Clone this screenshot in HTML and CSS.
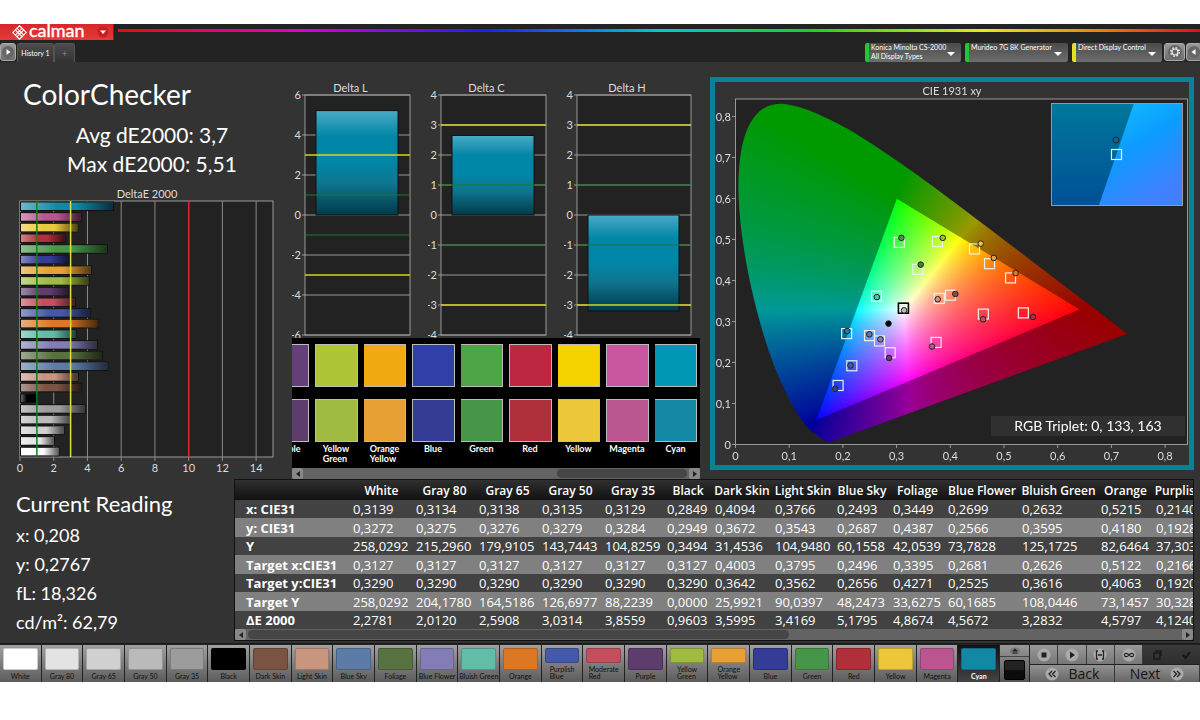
FILE: index.html
```html
<!DOCTYPE html>
<html lang="en">
  <head>
    <meta charset="UTF-8" />
    <meta name="viewport" content="width=device-width, initial-scale=1.0" />
    <title>Calman - ColorChecker</title>
    <link rel="stylesheet" href="styles.css">
  </head>
  <body>
    <div class="app">
      <header>
        <div class="brand-row">
          <button class="brand" aria-label="Calman menu">
            <svg class="logo" viewBox="0 0 16 16" width="15" height="15">
              <g fill="none" stroke="#fff" stroke-width="1.2">
                <path d="M8 .8L10.700 3.500 8 6.200 5.300 3.500zM8 9.800l2.700 2.700L8 15.200l-2.700-2.700zM3.500 5.300L6.200 8l-2.700 2.700L.8 8zM12.500 5.300L15.200 8l-2.700 2.700L9.800 8z" />
                <path d="M5.300 3.500L3.500 5.300M10.700 3.500l1.800 1.800M3.500 10.700l1.800 1.800M12.500 10.700l-1.800 1.800M8 6.200L9.800 8 8 9.800 6.200 8z" />
              </g>
            </svg>
            <span class="brand-name">calman</span>
            <svg class="round-arrow" viewBox="0 0 12 12" width="12" height="12">
              <circle cx="6" cy="6" r="5.500" fill="#c81f22" />
              <path d="M3 4.500h6l-3 3.500z" fill="#fff" />
            </svg>
          </button>
          <div class="rainbow"></div>
        </div>
        <div class="tab-row">
          <button class="icon-btn" aria-label="Run">
            <svg viewBox="0 0 14 14" width="14" height="14"><circle cx="7" cy="7" r="6" fill="#666" /><path d="M5.500 4l4 3-4 3z" fill="#fff" /></svg>
          </button>
          <button class="tab active">History 1</button>
          <button class="tab add" aria-label="Add tab">+</button>
          <div class="devices">
            <button class="device ok"><span>Konica Minolta CS-2000<br>All Display Types</span><i class="caret"></i></button>
            <button class="device ok wide"><span>Murideo 7G 8K Generator</span><i class="caret"></i></button>
            <button class="device warn"><span>Direct Display Control</span><i class="caret"></i></button>
            <button class="icon-btn gear" aria-label="Settings">
              <svg viewBox="0 0 16 16" width="16" height="16"><circle cx="8" cy="8" r="7" fill="#666" /><circle cx="8" cy="8" r="3" fill="none" stroke="#eee" stroke-width="1.200" /><circle cx="8" cy="8" r="4.300" fill="none" stroke="#eee" stroke-width="1.400" stroke-dasharray="1.700 1.680" /></svg>
            </button>
            <button class="icon-btn" aria-label="Collapse">
              <svg viewBox="0 0 14 14" width="14" height="14"><circle cx="7" cy="7" r="6" fill="#666" /><path d="M8.500 4l-4 3 4 3z" fill="#fff" /></svg>
            </button>
          </div>
        </div>
      </header>

      <main>
        <section class="panels">
          <div class="summary">
            <h1>ColorChecker</h1>
            <div class="stats">
              <p>Avg dE2000: 3,7</p>
              <p>Max dE2000: 5,51</p>
            </div>
            <svg id="delta-e" class="chart" viewBox="0 0 292 292"></svg>
          </div>

          <div class="deltas">
            <div class="delta-charts">
              <svg id="delta-l" class="chart" viewBox="0 0 136 258"></svg>
              <svg id="delta-c" class="chart" viewBox="0 0 136 258"></svg>
              <svg id="delta-h" class="chart" viewBox="0 0 136 258"></svg>
            </div>
            <ul class="compare" id="compare"></ul>
            <div class="scrollbar">
              <button class="scroll-btn left" aria-label="Scroll left"></button>
              <div class="scroll-track"><div class="scroll-thumb end"></div></div>
              <button class="scroll-btn right" aria-label="Scroll right"></button>
            </div>
          </div>

          <div class="cie">
            <canvas id="cie-fill" width="948" height="766"></canvas>
            <svg id="cie-plot" class="chart" viewBox="0 0 474 383"></svg>
          </div>
        </section>

        <section class="readings">
          <div class="current">
            <h2>Current Reading</h2>
            <p>x: 0,208</p>
            <p>y: 0,2767</p>
            <p>fL: 18,326</p>
            <p>cd/m²: 62,79</p>
          </div>
          <div class="data">
            <div class="table-wrap">
              <table>
                <colgroup id="cols"></colgroup>
                <thead><tr id="head"></tr></thead>
                <tbody id="rows"></tbody>
              </table>
            </div>
            <div class="scrollbar">
              <button class="scroll-btn left" aria-label="Scroll left"></button>
              <div class="scroll-track"><div class="scroll-thumb start"></div></div>
              <button class="scroll-btn right" aria-label="Scroll right"></button>
            </div>
          </div>
        </section>
      </main>

      <footer>
        <div class="patches" id="patches"></div>
        <div class="preview">
          <button class="eject" aria-label="Expand">
            <svg viewBox="0 0 12 8" width="12" height="8"><ellipse cx="6" cy="4" rx="5" ry="3.500" fill="#777" /><path d="M3 4.500l3-3 3 3z" fill="#222" /><path d="M3.500 5.500h5v1h-5z" fill="#222" /></svg>
          </button>
          <button class="stop-patch" aria-label="Current patch"><span></span></button>
        </div>
        <div class="controls">
          <div class="tools">
            <button aria-label="Stop"><svg viewBox="0 0 14 14" width="14" height="14"><circle cx="7" cy="7" r="6.500" fill="#aaa" /><path d="M4.500 4.500h5v5h-5z" fill="#222" /></svg></button>
            <button aria-label="Play"><svg viewBox="0 0 14 14" width="14" height="14"><circle cx="7" cy="7" r="6.500" fill="#aaa" /><path d="M5 3.500l5 3.500-5 3.500z" fill="#222" /></svg></button>
            <button aria-label="Read series"><svg viewBox="0 0 14 14" width="14" height="14"><circle cx="7" cy="7" r="6.500" fill="#aaa" /><path d="M5 3H3.500v8H5M9 3h1.500v8H9M5 7h4" fill="none" stroke="#222" stroke-width="1.300" /></svg></button>
            <button aria-label="Continuous"><svg viewBox="0 0 14 14" width="14" height="14"><circle cx="7" cy="7" r="6.500" fill="#aaa" /><path d="M7 7C5.500 5 2.500 4.500 2.500 7S5.500 9 7 7s4.500-2.500 4.500 0S8.500 9 7 7z" fill="none" stroke="#222" stroke-width="1.200" /></svg></button>
            <button class="off" aria-label="Copy"><svg viewBox="0 0 14 14" width="14" height="14"><path d="M4 5h6v6H4zM6 5V3h5v5" fill="none" stroke="#1c1c1c" stroke-width="1.400" /></svg></button>
            <button class="off" aria-label="Confirm"><svg viewBox="0 0 14 14" width="14" height="14"><circle cx="7" cy="7" r="5" fill="#333" /><path d="M4 7l2.500 3L11 4" fill="none" stroke="#161616" stroke-width="2" /></svg></button>
          </div>
          <div class="nav">
            <button>
              <svg viewBox="0 0 14 14" width="14" height="14"><circle cx="7" cy="7" r="6.500" fill="#aaa" /><path d="M7 4L4 7l3 3M10.500 4l-3 3 3 3" fill="none" stroke="#222" stroke-width="1.300" /></svg>
              Back
            </button>
            <button>
              Next
              <svg viewBox="0 0 14 14" width="14" height="14"><circle cx="7" cy="7" r="6.500" fill="#aaa" /><path d="M3.500 4l3 3-3 3M7 4l3 3-3 3" fill="none" stroke="#222" stroke-width="1.300" /></svg>
            </button>
          </div>
        </div>
      </footer>
    </div>
    <script src="script.js"></script>
  </body>
</html>
```
FILE: styles.css
```css
* {
  margin: 0;
  padding: 0;
  box-sizing: border-box;
}
body {
  padding: 24px 0;
  background-color: #fff;
  font-family: Lato, "Liberation Sans", sans-serif;
  color: #fff;
}
button {
  border: none;
  background: none;
  font-family: inherit;
  color: inherit;
  cursor: pointer;
}
ul {
  list-style: none;
}
.app {
  background-color: #333;
  overflow: hidden;
}

/* header */
header {
  background-color: #232323;
}
.brand-row {
  display: flex;
  height: 16px;
}
.brand {
  display: flex;
  align-items: center;
  width: 114px;
  padding-left: 12px;
  background: linear-gradient(#d8272b, #e33b38);
  border-right: 1px solid #8c1a1c;
  overflow: hidden;
}
.brand-name {
  margin-left: 2px;
  font-size: 18px;
  line-height: 16px;
  height: 20px;
  -webkit-text-stroke: 0.4px #fff;
}
.round-arrow {
  margin-left: 12px;
}
.rainbow {
  flex: 1;
  height: 3px;
  margin: 5px 0 0 4px;
  background: linear-gradient(to right, #e01010, #e000d0 17%, #2020f0 34%, #00c8d8 50%, #20d020 64%, #e8e820 80%, #e88010 91%, #e01010);
}
.tab-row {
  display: flex;
  align-items: flex-end;
  height: 22px;
}
.icon-btn {
  display: flex;
  align-items: center;
  justify-content: center;
  width: 16px;
  height: 18px;
  margin-bottom: 1px;
  background: linear-gradient(#999, #6c6c6c);
  border: 1px solid #aaa;
  border-radius: 3px;
}
.icon-btn svg,
.tools svg,
.nav svg,
.brand svg {
  flex: none;
}
.tab {
  height: 19px;
  padding: 0 3px;
  margin-left: 1px;
  background: linear-gradient(#4c4c4c, #333);
  border: 1px solid #555;
  border-bottom: none;
  border-radius: 3px 3px 0 0;
  font-size: 7px;
}
.tab.active {
  width: 37px;
}
.tab.add {
  width: 21px;
  margin-left: 0;
  color: #888;
  font-size: 9px;
}
.devices {
  display: flex;
  margin-left: auto;
  margin-right: -2px;
  gap: 1px;
}
.device {
  display: flex;
  width: 90px;
  height: 19px;
  padding-left: 2px;
  margin-right: 3px;
  border-left: 4px solid #1fc832;
  border-radius: 2px;
  background: linear-gradient(#4a4a4a, #6e6e6e);
  font-size: 7px;
  line-height: 9px;
  text-align: left;
  white-space: nowrap;
}
.device.ok {
  width: 96px;
}
.device.wide {
  width: 103px;
}
.device.warn {
  margin-right: 1px;
  border-left-color: #e6e020;
}
.device .caret {
  margin: 9px 6px 0 auto;
  border: 4px solid transparent;
  border-top-color: #fff;
  border-bottom: none;
  height: 4px;
}
.gear {
  width: 21px;
}

/* charts */
.panels {
  display: grid;
  grid-template-columns: 292fr 408fr 500fr;
  align-items: start;
}
.chart {
  display: block;
  width: 100%;
  font-size: 11px;
  fill: #ddd;
}
.summary h1 {
  margin: 16px 0 10px 23px;
  font-size: 28px;
  font-weight: 400;
  line-height: 32px;
}
.stats {
  margin: 0 0 8px 12px;
  text-align: center;
  width: 280px;
  font-size: 21px;
  line-height: 29px;
}
.delta-charts {
  display: grid;
  grid-template-columns: repeat(3, 1fr);
  padding-top: 18px;
}
.compare {
  display: grid;
  grid-template-columns: 17px repeat(8, 1fr);
  gap: 6px;
  height: 130px;
  padding: 6px 3px 0 0;
  background-color: #000;
  overflow: hidden;
}
.compare li {
  display: flex;
  justify-content: flex-end;
  overflow: hidden;
}
.compare-item {
  flex: 1 0 43px;
  display: flex;
  flex-direction: column;
  align-items: center;
}
.compare-item div {
  width: 100%;
  height: 43px;
  border: 1px solid #bbb;
}
.compare-item div + div {
  margin: 12px 0 2px;
}
.compare-item span {
  font-size: 9px;
  font-weight: 700;
  line-height: 10px;
}
.scrollbar {
  display: flex;
  height: 11px;
  background-color: #636363;
}
.scroll-btn {
  display: flex;
  align-items: center;
  justify-content: center;
  width: 11px;
  background-color: #888;
  border-radius: 2px;
}
.scroll-btn::before {
  content: "";
  border: 3px solid transparent;
}
.scroll-btn.left::before {
  border-right: 4px solid #222;
  border-left: none;
}
.scroll-btn.right::before {
  border-left: 4px solid #222;
  border-right: none;
}
.scroll-track {
  flex: 1;
  display: flex;
  padding: 1px 2px;
}
.scroll-thumb {
  border-radius: 5px;
  background-color: #464646;
}
.scroll-thumb.end {
  width: 34%;
  margin-left: auto;
}
.scroll-thumb.start {
  width: 58%;
}
.cie {
  position: relative;
  margin: 15px 6px 0 10px;
  border: 5px solid #08829b;
}
.cie canvas {
  display: block;
  width: 100%;
}
.cie .chart {
  position: absolute;
  top: 0;
  left: 0;
}

/* readings */
.readings {
  display: grid;
  grid-template-columns: 234px 1fr;
}
.current {
  padding: 12px 0 0 16px;
  font-size: 18px;
  line-height: 29px;
}
.current h2 {
  margin-bottom: 4px;
  font-size: 22px;
  font-weight: 400;
  line-height: 26px;
}
.data {
  min-width: 0;
  margin: 0 6px 2px 0;
  border: 1px solid #111;
}
.table-wrap {
  overflow: hidden;
}
table {
  width: 935px;
  table-layout: fixed;
  border-collapse: collapse;
  font-family: "Open Sans", "Noto Sans", sans-serif;
  font-size: 13px;
  white-space: nowrap;
}
thead {
  background: linear-gradient(#303030, #111);
}
thead th {
  height: 20px;
  font-size: 12px;
  font-weight: 600;
}
tbody th,
tbody td {
  height: 18px;
  padding-left: 3px;
  line-height: 18px;
  text-align: left;
}
tbody th {
  padding-left: 11px;
  font-weight: 700;
}
tbody tr {
  background-color: #424242;
}
tbody tr:nth-child(even) {
  background-color: #808080;
}
tbody tr:nth-child(even) td {
  height: 19px;
}

/* footer */
footer {
  display: grid;
  grid-template-columns: 1fr 30px 170px;
  height: 39px;
  padding-top: 1px;
  border-top: 1px solid #1a1a1a;
  background-color: #222;
}
.patches {
  display: flex;
}
.patch {
  flex: 1 1 0;
  min-width: 0;
  display: flex;
  flex-direction: column;
  align-items: center;
  padding: 3px 3px 2px;
  border-right: 1px solid #222;
  background: linear-gradient(#a0a0a0, #5c5c5c);
  color: #111;
  font-size: 7px;
  line-height: 7px;
  text-align: left;
  white-space: nowrap;
}
.patch div {
  flex: 1;
  width: 100%;
  margin-bottom: 3px;
  border: 1px solid rgb(0 0 0 / 20%);
  border-radius: 2px;
}
.patch.selected {
  background: linear-gradient(#111, #444);
  color: #fff;
  font-weight: 700;
}
.preview {
  display: flex;
  flex-direction: column;
  margin-right: 1px;
  background: linear-gradient(#999, #555);
}
.eject {
  display: flex;
  justify-content: center;
  align-items: center;
  height: 12px;
  border-bottom: 1px solid #444;
}
.stop-patch {
  flex: 1;
  padding: 2px 4px;
}
.stop-patch span {
  display: block;
  height: 20px;
  background: linear-gradient(#222 50%, #0c0c0c 50%);
  border: 1px solid #000;
  border-radius: 2px;
}
.controls {
  display: grid;
  grid-template-rows: 19px 1fr;
  gap: 1px;
}
.tools {
  display: grid;
  grid-template-columns: repeat(6, 1fr);
}
.tools button,
.nav button {
  display: flex;
  align-items: center;
  justify-content: center;
  background: linear-gradient(#999, #777);
  border-right: 1px solid #3a3a3a;
}
.tools button.off {
  background: linear-gradient(#3a3a3a, #2e2e2e);
  border: none;
}
.nav {
  display: grid;
  grid-template-columns: 1fr 1fr;
}
.nav button {
  gap: 10px;
  background: linear-gradient(#929292, #666);
  color: #151515;
  font-family: "Open Sans", "Noto Sans", sans-serif;
  font-size: 14px;
  line-height: 16px;
}
```
FILE: script.js
```js
// name, bar colour, target colour, dE2000
const patches = [
  ["White", "#ffffff", "#ffffff", 2.2781],
  ["Gray 80", "#e3e3e3", "#e3e3e3", 2.012],
  ["Gray 65", "#d0d0d0", "#d0d0d0", 2.5908],
  ["Gray 50", "#bababa", "#bababa", 3.0314],
  ["Gray 35", "#9c9c9c", "#9c9c9c", 3.8559],
  ["Black", "#000000", "#000000", 0.9603],
  ["Dark Skin", "#7a5343", "#7a5343", 3.5995],
  ["Light Skin", "#c8957f", "#c8957f", 3.4169],
  ["Blue Sky", "#5c7ba6", "#5c7ba6", 5.1795],
  ["Foliage", "#587141", "#587141", 4.8674],
  ["Blue Flower", "#827eb5", "#827eb5", 4.5672],
  ["Bluish Green", "#62bda8", "#62bda8", 3.2832],
  ["Orange", "#dc7824", "#dc7824", 4.5797],
  ["Purplish<br>Blue", "#4659a8", "#4659a8", 4.124],
  ["Moderate<br>Red", "#c44e5e", "#c44e5e", 3.25],
  ["Purple", "#5d3d6c", "#63407a", 2.95],
  ["Yellow<br>Green", "#a0bb42", "#aec536", 4.05],
  ["Orange<br>Yellow", "#e6a033", "#f2aa13", 4.2],
  ["Blue", "#343c96", "#3040a8", 2.9],
  ["Green", "#479548", "#4ea548", 5.15],
  ["Red", "#af303a", "#be2740", 2.65],
  ["Yellow", "#edc73a", "#f5d300", 3.4],
  ["Magenta", "#bb5590", "#c957a0", 3.6],
  ["Cyan", "#1288a5", "#0097b5", 5.51],
];

const line = (x1, y1, x2, y2, color, width = 1) =>
  `<path d="M${x1} ${y1}L${x2} ${y2}" stroke="${color}" stroke-width="${width}" />`;
const label = (x, y, text, anchor = "middle") =>
  `<text x="${x}" y="${y}" text-anchor="${anchor}">${text}</text>`;

// DeltaE 2000 bars
function drawDeltaE() {
  const left = 20, top = 15, right = 273, bottom = 271;
  const unit = (right - left) / 15;
  let s = `<defs><linearGradient id="shade"><stop stop-color="#fff" stop-opacity=".4" />
    <stop offset=".4" stop-color="#fff" stop-opacity="0" /><stop offset=".6" stop-opacity="0" />
    <stop offset="1" stop-opacity=".65" /></linearGradient></defs>`;
  s += label(147, 12, "DeltaE 2000");
  s += `<rect x="${left}" y="${top}" width="${right - left}" height="${bottom - top}" fill="#222" stroke="#999" />`;
  for (let v = 0; v < 15; v += 2) {
    const x = left + v * unit;
    s += line(x, top, x, bottom + 4, "#8a8a8a") + label(x, 286, v);
  }
  const step = (bottom - top) / 24;
  [...patches].reverse().forEach((p, i) => {
    const box = `x="${left + 1}" y="${top + 1.5 + i * step}" width="${p[3] * unit - 1}" height="7.500"`;
    s += `<rect ${box} fill="${p[1]}" stroke="#111" stroke-width="2" paint-order="stroke" /><rect ${box} fill="url(#shade)" />`;
  });
  s += line(left + unit, top, left + unit, bottom, "#187818", 1.5);
  s += line(left + 3 * unit, top, left + 3 * unit, bottom, "#e0e040", 1.5);
  s += line(left + 10 * unit, top, left + 10 * unit, bottom, "#d8232f", 1.5);
  document.getElementById("delta-e").innerHTML = s;
}

// Delta L / C / H
function drawDelta(id, title, max, step, value, right) {
  const left = 13, top = 15, bottom = 255;
  const y = (v) => 135 - (v * 120) / max;
  const mid = (left + right) / 2;
  let s = `<defs><linearGradient id="${id}-g" x2="0" y2="1"><stop stop-color="#4aaac4" />
    <stop offset=".25" stop-color="#0086a6" /><stop offset=".5" stop-color="#0086a6" />
    <stop offset=".7" stop-color="#0f7590" /><stop offset="1" stop-color="#003a48" /></linearGradient></defs>`;
  s += label(mid - 7, 12, title);
  s += `<rect x="${left}" y="${top}" width="${right - left}" height="${bottom - top}" fill="#222" stroke="#999" />`;
  for (let v = -max; v <= max; v += step) {
    s += line(left - 3, y(v), right, y(v), "#999") + label(left - 4, y(v) + 4, v, "end");
  }
  s += `<rect x="${left + 11}" y="${Math.min(y(0), y(value))}" width="${right - left - 23}" height="${Math.abs(y(value) - y(0))}" fill="url(#${id}-g)" stroke="#111" />`;
  for (const v of [1, -1]) s += line(left, y(v), right, y(v), "#1d7a2c");
  for (const v of [3, -3]) s += line(left, y(v), right, y(v), "#d6d61e", 1.5);
  document.getElementById(id).innerHTML = s;
}

// CIE 1931 xy
const px = (x) => 20.5 + x * 537;
const py = (y) => 362.5 - y * 410;

const locus = [
  [.1741, .005], [.1714, .0051], [.1644, .0109], [.1566, .0177], [.144, .0297], [.1355, .0399],
  [.1241, .0578], [.1096, .0868], [.0913, .1327], [.0687, .2007], [.0454, .295], [.0235, .4127],
  [.0082, .5384], [.0039, .6548], [.0139, .7502], [.0389, .812], [.0743, .8338], [.1142, .8262],
  [.1547, .8059], [.1929, .7816], [.2296, .7543], [.3016, .6923], [.3731, .6245], [.4441, .5547],
  [.5125, .4866], [.5752, .4242], [.627, .3725], [.6658, .334], [.6915, .3083], [.719, .2809], [.73, .27],
];

const targets = [
  [.305, .493], [.376, .495], [.445, .477], [.473, .441], [.5122, .4063], [.3395, .4271],
  [.2626, .3616], [.3795, .3562], [.4003, .3642], [.4615, .318], [.536, .321], [.3735, .249],
  [.288, .224], [.2681, .2525], [.2496, .2656], [.207, .2705], [.2166, .192], [.191, .144],
];
const measured = [
  [.309, .504, "#479548"], [.386, .504, "#a0bb42"], [.4566, .49, "#edc73a"], [.481, .455, "#e6a033"],
  [.5215, .418, "#dc7824"], [.3449, .4387, "#587141"], [.2632, .3595, "#62bda8"], [.3766, .3543, "#c8957f"],
  [.4094, .3672, "#7a5343"], [.461, .3055, "#c44e5e"], [.554, .311, "#af303a"], [.366, .239, "#bb5590"],
  [.286, .211, "#5d3d6c"], [.2699, .2566, "#827eb5"], [.2493, .2687, "#5c7ba6"], [.208, .2767, "#0788a5"],
  [.214, .1928, "#4659a8"], [.1855, .1357, "#343c96"], [.2849, .2949, "#000"], [.3139, .3272, "#bbb"],
];

function drawGamut() {
  const canvas = document.getElementById("cie-fill");
  const ctx = canvas.getContext("2d");
  const w = canvas.width, h = canvas.height;
  const layer = document.createElement("canvas");
  layer.width = w;
  layer.height = h;
  const lctx = layer.getContext("2d");
  const img = lctx.createImageData(w, h);
  for (let j = 0; j < h; j++) {
    for (let i = 0; i < w; i++) {
      const x = (i / 2 - 20.5) / 537;
      const y = Math.max((362.5 - j / 2) / 410, 0.001);
      const X = x / y, Z = (1 - x - y) / y;
      const rgb = [
        3.2406 * X - 1.5372 - 0.4986 * Z,
        -0.9689 * X + 1.8758 + 0.0415 * Z,
        0.0557 * X - 0.204 + 1.057 * Z,
      ];
      // colours outside Rec.709 are dimmed
      const k = Math.min(...rgb) < 0 ? 0.6 : 1;
      const max = Math.max(...rgb);
      const o = (j * w + i) * 4;
      for (let c = 0; c < 3; c++) {
        img.data[o + c] = 255 * k * Math.pow(Math.max(rgb[c], 0) / max, 0.8);
      }
      img.data[o + 3] = 255;
    }
  }
  lctx.putImageData(img, 0, 0);

  ctx.fillStyle = "#222";
  ctx.fillRect(41, 34, 904, 691);
  ctx.beginPath();
  const pts = locus.map(([x, y]) => [px(x) * 2, py(y) * 2]);
  ctx.moveTo(...pts[0]);
  for (let i = 1; i < pts.length - 1; i++) {
    const [a, b] = [pts[i], pts[i + 1]];
    ctx.quadraticCurveTo(a[0], a[1], (a[0] + b[0]) / 2, (a[1] + b[1]) / 2);
  }
  ctx.lineTo(...pts[pts.length - 1]);
  ctx.closePath();
  ctx.clip();
  ctx.drawImage(layer, 0, 0);
}

function drawCie() {
  let s = `<defs>
    <linearGradient id="in-a" x2="0" y2="1"><stop stop-color="#00789a" /><stop offset="1" stop-color="#005096" /></linearGradient>
    <linearGradient id="in-b" x2=".5" y2="1"><stop stop-color="#10c4ff" /><stop offset=".5" stop-color="#0c9cff" /><stop offset="1" stop-color="#4080ff" /></linearGradient>
  </defs>`;
  s += label(237, 13, "CIE 1931 xy");
  s += `<rect x="20.500" y="17" width="452" height="345.500" fill="none" stroke="#999" />`;
  for (let i = 0; i <= 8; i++) {
    const text = i ? "0," + i : "0";
    s += line(px(i / 10), 362, px(i / 10), 366, "#999") + label(px(i / 10), 378, text);
    s += line(17, py(i / 10), 20, py(i / 10), "#999") + label(16, py(i / 10) + 4, text, "end");
  }
  for (const [x, y] of targets) {
    s += `<rect x="${px(x) - 5}" y="${py(y) - 5}" width="10" height="10" fill="none" stroke="#eee" stroke-width="1.200" />`;
  }
  s += `<rect x="${px(.3127) - 5}" y="${py(.3325) - 5}" width="10" height="10" fill="#fff" fill-opacity=".4" stroke="#000" stroke-width="1.600" />`;
  for (const [x, y, color] of measured) {
    s += `<circle cx="${px(x)}" cy="${py(y)}" r="2.800" fill="${color}" stroke="#222" />`;
  }
  // zoomed view of the selected patch
  s += `<rect x="336" y="21" width="132" height="102" fill="url(#in-a)" />
    <path d="M419 21h49v102h-84z" fill="url(#in-b)" />
    <rect x="336.500" y="21.500" width="131" height="102" fill="none" stroke="#999" />
    <circle cx="401" cy="58" r="3" fill="#0a6a88" stroke="#223" />
    <rect x="396.500" y="67.500" width="10" height="10" fill="none" stroke="#eee" stroke-width="1.200" />`;
  s += `<rect x="276" y="334" width="194" height="20" fill="#303030" />
    <text x="373" y="349" text-anchor="middle" font-size="14" fill="#fff">RGB Triplet: 0, 133, 163</text>`;
  document.getElementById("cie-plot").innerHTML = s;
}

const columns = [
  ["White", 63, "0,3139 0,3272 258,0292 0,3127 0,3290 258,0292 2,2781"],
  ["Gray 80", 63, "0,3134 0,3275 215,2960 0,3127 0,3290 204,1780 2,0120"],
  ["Gray 65", 63, "0,3138 0,3276 179,9105 0,3127 0,3290 164,5186 2,5908"],
  ["Gray 50", 63, "0,3135 0,3279 143,7443 0,3127 0,3290 126,6977 3,0314"],
  ["Gray 35", 62, "0,3129 0,3284 104,8259 0,3127 0,3290 88,2239 3,8559"],
  ["Black", 48, "0,2849 0,2949 0,3494 0,3127 0,3290 0,0000 0,9603"],
  ["Dark Skin", 60, "0,4094 0,3672 31,4536 0,4003 0,3642 25,9921 3,5995"],
  ["Light Skin", 62, "0,3766 0,3543 104,9480 0,3795 0,3562 90,0397 3,4169"],
  ["Blue Sky", 56, "0,2493 0,2687 60,1558 0,2496 0,2656 48,2473 5,1795"],
  ["Foliage", 55, "0,3449 0,4387 42,0539 0,3395 0,4271 33,6275 4,8674"],
  ["Blue Flower", 74, "0,2699 0,2566 73,7828 0,2681 0,2525 60,1685 4,5672"],
  ["Bluish Green", 79, "0,2632 0,3595 125,1725 0,2626 0,3616 108,0446 3,2832"],
  ["Orange", 55, "0,5215 0,4180 82,6464 0,5122 0,4063 73,1457 4,5797"],
  ["Purplish Blue", 80, "0,2140 0,1928 37,3034 0,2166 0,1920 30,3285 4,1240"],
];
const rowNames = ["x: CIE31", "y: CIE31", "Y", "Target x:CIE31", "Target y:CIE31", "Target Y", "ΔE 2000"];

function fillTable() {
  document.getElementById("cols").innerHTML =
    `<col style="width: 115px">` + columns.map((c) => `<col style="width: ${c[1]}px">`).join("");
  document.getElementById("head").innerHTML = "<td></td>" + columns.map((c) => `<th scope="col">${c[0]}</th>`).join("");
  document.getElementById("rows").innerHTML = rowNames
    .map((name, i) => `<tr><th scope="row">${name}</th>${columns.map((c) => `<td>${c[2].split(" ")[i]}</td>`).join("")}</tr>`)
    .join("");
}

document.getElementById("compare").innerHTML = patches
  .slice(15)
  .map((p) => `<li><div class="compare-item"><div style="background-color: ${p[2]}"></div><div style="background-color: ${p[1]}"></div><span>${p[0]}</span></div></li>`)
  .join("");
document.getElementById("patches").innerHTML = patches
  .map((p) => `<button class="patch${p[0] === "Cyan" ? " selected" : ""}"><div style="background-color: ${p[1]}"></div><span>${p[0]}</span></button>`)
  .join("");

drawDeltaE();
drawDelta("delta-l", "Delta L", 6, 2, 5.22, 118);
drawDelta("delta-c", "Delta C", 4, 1, 2.65, 118);
drawDelta("delta-h", "Delta H", 4, 1, -3.2, 127);
drawGamut();
drawCie();
fillTable();
```
